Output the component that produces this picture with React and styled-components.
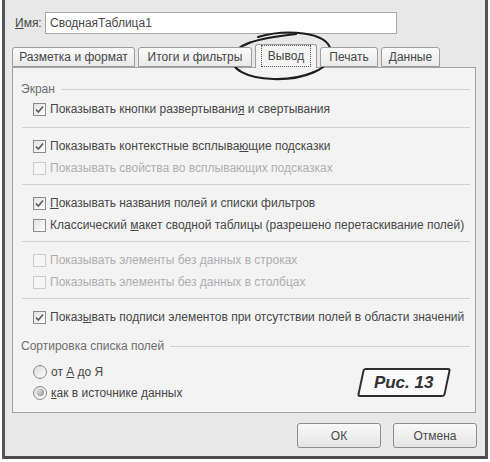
import React from "react";
import styled, { createGlobalStyle } from "styled-components";

const GlobalStyle = createGlobalStyle`
  html, body {
    margin: 0;
    padding: 0;
    background: #fff;
  }
  body {
    font-family: "Liberation Sans", Arial, sans-serif;
    font-size: 12px;
    color: #474747;
  }
`;

const Page = styled.div`
  position: relative;
  width: 490px;
  height: 462px;
  overflow: hidden;
`;

const Dialog = styled.div`
  margin-left: 2px;
  width: 486px;
  height: 459px;
  box-sizing: border-box;
  border-left: 3px solid #555;
  border-right: 3px solid #555;
  border-bottom: 3px solid #4c4c4c;
  background: #e8e8e8;
  display: flex;
  flex-direction: column;
`;

const NameRow = styled.div`
  display: flex;
  align-items: center;
  padding: 12px 0 0 5px;
`;

const NameLabel = styled.label`
  width: 30px;
  padding-left: 5px;
  color: #474747;
`;

const NameInput = styled.div`
  width: 352px;
  height: 22px;
  box-sizing: border-box;
  border: 1px solid #a8a8a8;
  background: #fff;
  display: flex;
  align-items: center;
  padding-left: 4px;
  color: #474747;
`;

const TabBar = styled.div`
  display: flex;
  align-items: flex-end;
  gap: 3px;
  padding-left: 7px;
  margin-top: 9px;
  height: 24px;
  position: relative;
  z-index: 1;
`;

const Tab = styled.div`
  width: ${(p) => p.$w}px;
  height: ${(p) => (p.$active ? 24 : 20)}px;
  box-sizing: border-box;
  border: 1px solid #9c9c9c;
  border-bottom: ${(p) => (p.$active ? "none" : "1px solid #9c9c9c")};
  border-radius: 3px 3px 0 0;
  background: ${(p) =>
    p.$active ? "#f4f4f4" : "linear-gradient(#fbfbfb, #e9e9e9)"};
  display: flex;
  align-items: center;
  justify-content: center;
  color: #474747;
  margin-bottom: ${(p) => (p.$active ? "-1px" : "0")};
  padding-bottom: ${(p) => (p.$active ? "2px" : "0")};
`;

const Focus = styled.span`
  outline: 1px dotted #555;
  outline-offset: 3px;
  padding: 0 3px;
`;

const Panel = styled.div`
  position: relative;
  margin-left: 7px;
  width: 464px;
  height: 346px;
  box-sizing: border-box;
  border: 1px solid #a2a2a2;
  background: #f3f3f3;
  padding: 0 5px 0 8px;
  display: flex;
  flex-direction: column;
`;

const GroupHead = styled.div`
  display: flex;
  align-items: center;
  height: 14px;
  margin-top: ${(p) => p.$top}px;
  color: #6e6e6e;
  &::after {
    content: "";
    flex: 1;
    margin-left: 6px;
    border-top: 1px solid #d2d2d2;
  }
`;

const Row = styled.div`
  display: flex;
  align-items: center;
  height: ${(p) => p.$h || 22}px;
  padding-left: 12px;
  gap: 4px;
  margin-top: ${(p) => p.$top || 0}px;
  color: ${(p) => (p.$disabled ? "#afafaf" : "#474747")};
  white-space: nowrap;
`;

const Separator = styled.div`
  margin: ${(p) => p.$top}px 0 7px 1px;
  border-top: 1px solid #d2d2d2;
`;

const Box = styled.span`
  width: 13px;
  height: 13px;
  box-sizing: border-box;
  flex: none;
  border: 1px solid ${(p) => (p.$disabled ? "#cdcdcd" : "#8c8c8c")};
  background: ${(p) =>
    p.$disabled ? "#f6f6f6" : "linear-gradient(135deg, #e2e2e2, #fdfdfd)"};
  display: flex;
  align-items: center;
  justify-content: center;
`;

const Radio = styled.span`
  width: 14px;
  height: 14px;
  box-sizing: border-box;
  flex: none;
  border-radius: 50%;
  border: 1px solid #8a8a8a;
  background: linear-gradient(135deg, #dcdcdc, #fcfcfc);
  display: flex;
  align-items: center;
  justify-content: center;
  &::after {
    content: "";
    display: ${(p) => (p.$on ? "block" : "none")};
    width: 7px;
    height: 7px;
    border-radius: 50%;
    background: radial-gradient(circle at 35% 35%, #dadada, #858585);
  }
`;

const Badge = styled.div`
  position: absolute;
  left: 347px;
  top: 300px;
  width: 84px;
  height: 25px;
  border: 2px solid #2e2e2e;
  border-radius: 3px;
  background: #fafafa;
  transform: skewX(-12deg);
  display: flex;
  align-items: center;
  justify-content: center;
`;

const BadgeText = styled.span`
  transform: skewX(12deg);
  font-family: "Liberation Sans", Arial, sans-serif;
  font-weight: bold;
  font-style: italic;
  font-size: 17px;
  color: #333;
`;

const Footer = styled.div`
  display: flex;
  justify-content: flex-end;
  gap: 12px;
  padding-right: 8px;
  margin-top: 10px;
`;

const Button = styled.div`
  width: 84px;
  height: 25px;
  box-sizing: border-box;
  border: 1px solid #8e8e8e;
  border-radius: 3px;
  background: linear-gradient(#f9f9f9, #e4e4e4);
  display: flex;
  align-items: center;
  justify-content: center;
  color: #4a4a4a;
`;

const Overlay = styled.svg`
  position: absolute;
  left: 0;
  top: 0;
  pointer-events: none;
`;

const Check = () => (
  <svg width="11" height="11" viewBox="0 0 11 11">
    <path d="M2 5.6 L4.4 8 L9 2.6" fill="none" stroke="#5c5c5c" strokeWidth="1.6" />
  </svg>
);

const CheckRow = ({ checked, disabled, children, top }) => (
  <Row $disabled={disabled} $top={top}>
    <Box $disabled={disabled}>{checked && <Check />}</Box>
    <span>{children}</span>
  </Row>
);

const tabs = [
  { label: "Разметка и формат", w: 123 },
  { label: "Итоги и фильтры", w: 114 },
  { label: "Вывод", w: 62, active: true },
  { label: "Печать", w: 58 },
  { label: "Данные", w: 59 },
];

export default function App() {
  return (
    <Page>
      <GlobalStyle />
      <Dialog>
        <NameRow>
          <NameLabel>
            <u>И</u>мя:
          </NameLabel>
          <NameInput>СводнаяТаблица1</NameInput>
        </NameRow>
        <TabBar>
          {tabs.map((t) => (
            <Tab key={t.label} $w={t.w} $active={t.active}>
              {t.active ? <Focus>{t.label}</Focus> : t.label}
            </Tab>
          ))}
        </TabBar>
        <Panel>
          <GroupHead $top={14}>Экран</GroupHead>
          <CheckRow checked top={2}>
            Показывать кнопки развертывани<u>я</u> и свертывания
          </CheckRow>
          <Separator $top={7} />
          <CheckRow checked>
            Показывать контекстные всплыва<u>ю</u>щие подсказки
          </CheckRow>
          <CheckRow disabled>Показывать свойства во всплывающих подсказках</CheckRow>
          <Separator $top={5} />
          <CheckRow checked>
            <u>П</u>оказывать названия полей и списки фильтров
          </CheckRow>
          <CheckRow>
            Классический <u>м</u>акет сводной таблицы (разрешено перетаскивание полей)
          </CheckRow>
          <Separator $top={5} />
          <CheckRow disabled>Показывать элементы без данных в строках</CheckRow>
          <CheckRow disabled>Показывать элементы без данных в столбцах</CheckRow>
          <Separator $top={5} />
          <CheckRow checked>
            Показ<u>ы</u>вать подписи элементов при отсутствии полей в области значений
          </CheckRow>
          <GroupHead $top={11}>Сортировка списка полей</GroupHead>
          <Row $h={21} $top={8}>
            <Radio />
            <span>
              от <u>А</u> до Я
            </span>
          </Row>
          <Row $h={21}>
            <Radio $on />
            <span>
              <u>к</u>ак в источнике данных
            </span>
          </Row>
          <Badge>
            <BadgeText>Рuс. 13</BadgeText>
          </Badge>
        </Panel>
        <Footer>
          <Button>ОК</Button>
          <Button>Отмена</Button>
        </Footer>
      </Dialog>
      <Overlay width="490" height="100" viewBox="0 0 490 100">
        <path
          d="M258 37 C 285 29, 328 31, 331 51 C 334 69, 302 80, 273 79 C 246 78, 230 69, 233 57 C 236 45, 252 39, 296 34"
          fill="none"
          stroke="#1e1e1e"
          strokeWidth="2.2"
          strokeLinecap="round"
        />
      </Overlay>
    </Page>
  );
}
